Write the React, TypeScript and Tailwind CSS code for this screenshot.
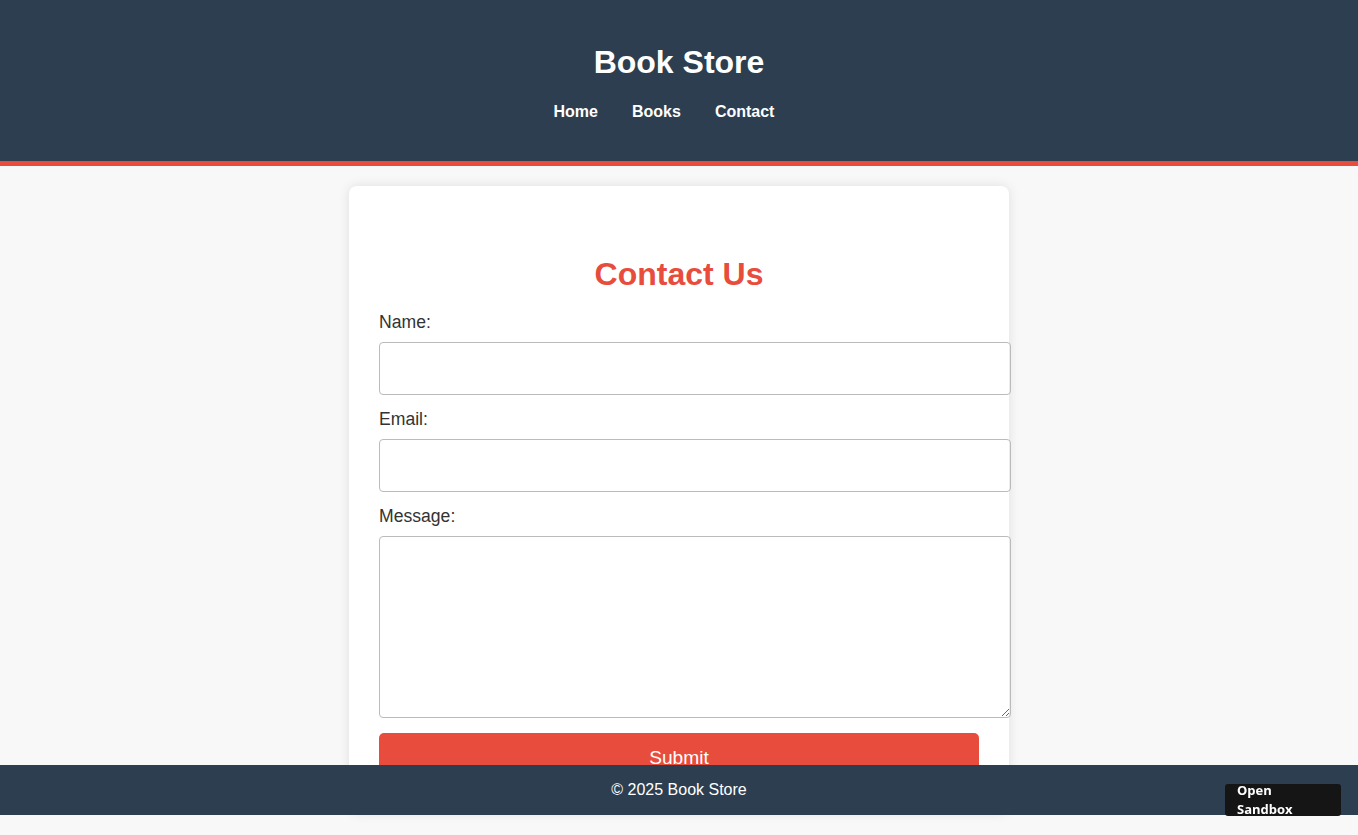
export default function App() {
  return (
    <div className="min-h-screen bg-[#f8f8f8] font-['Liberation_Sans',Arial,sans-serif] text-[#333]">
      <header className="border-b-[5px] border-[#e74c3c] bg-[#2c3e50] pt-[44px] pb-[40px] text-center text-white">
        <h1 className="text-[32px] font-bold leading-[37px]">Book Store</h1>
        <nav className="mt-[22px] flex justify-center gap-[34px] pr-[30px] text-[16px] font-bold leading-[18px]">
          <a href="#">Home</a>
          <a href="#">Books</a>
          <a href="#">Contact</a>
        </nav>
      </header>

      <main className="flex justify-center pt-[20px] pb-[40px]">
        <div className="w-[660px] rounded-[8px] bg-white p-[30px] shadow-[0_0_12px_rgba(0,0,0,0.1)]">
          <h2 className="mt-[40px] mb-[19px] text-center text-[32px] font-bold leading-[37px] text-[#e74c3c]">
            Contact Us
          </h2>
          <form className="flex flex-col">
            <label className="mb-[10px] text-[17.6px] leading-[20px]">Name:</label>
            <input
              type="text"
              className="mb-[14px] h-[53px] w-[632px] rounded-[4px] border border-[#bbb] px-[15px] outline-none"
            />
            <label className="mb-[10px] text-[17.6px] leading-[20px]">Email:</label>
            <input
              type="email"
              className="mb-[14px] h-[53px] w-[632px] rounded-[4px] border border-[#bbb] px-[15px] outline-none"
            />
            <label className="mb-[10px] text-[17.6px] leading-[20px]">Message:</label>
            <textarea className="mb-[15px] h-[182px] w-[632px] rounded-[4px] border border-[#bbb] p-[15px] outline-none" />
            <button
              type="button"
              className="h-[50px] w-[600px] rounded-[5px] bg-[#e74c3c] text-[19.2px] text-white"
            >
              Submit
            </button>
          </form>
        </div>
      </main>

      <footer className="fixed bottom-[20px] left-0 right-0 flex h-[50px] items-center justify-center bg-[#2c3e50] text-[16px] text-white">
        © 2025 Book Store
      </footer>

      <div className="fixed left-[1225px] top-[784px] h-[32px] w-[116px] overflow-hidden rounded-[3px] bg-[#151515] px-[12px] font-['Open_Sans',sans-serif] text-[13px] font-bold leading-[19px] text-white">
        <div className="-mt-[3px]">Open Sandbox</div>
      </div>
    </div>
  );
}
